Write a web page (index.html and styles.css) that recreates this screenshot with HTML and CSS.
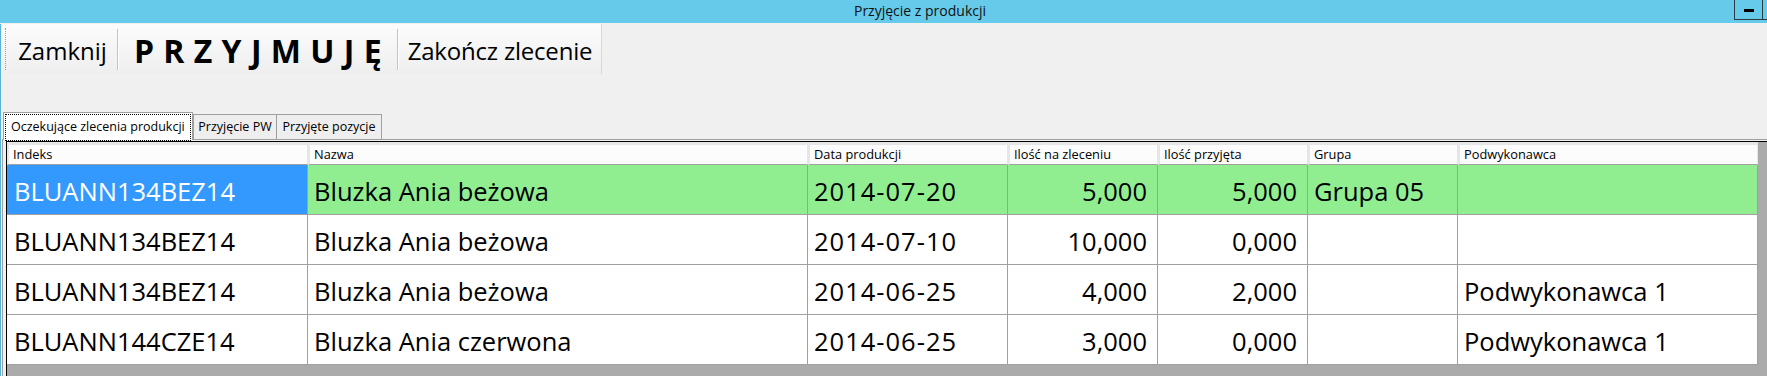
FILE: index.html
```html
<!DOCTYPE html>
<html lang="pl">
<head>
    <meta charset="UTF-8">
    <meta name="viewport" content="width=device-width, initial-scale=1.0">
    <title>Przyjęcie z produkcji</title>
    <link rel="stylesheet" href="styles.css">
</head>
<body>
    <div class="window">
        <div class="titlebar">
            <div class="title">Przyjęcie z produkcji</div>
            <div class="caption">
                <div class="cap-btn min"><span class="bar"></span></div>
                <div class="cap-btn max"></div>
                <div class="cap-btn close"></div>
            </div>
        </div>

        <div class="client">
            <div class="toolbar">
                <div class="grip"></div>
                <div class="tool tool-close">Zamknij</div>
                <div class="sep"></div>
                <div class="tool tool-accept">P R Z Y J M U J Ę</div>
                <div class="sep"></div>
                <div class="tool tool-finish">Zakończ zlecenie</div>
            </div>

            <div class="tabs">
                <div class="tab-strip">
                    <div class="tab active"><span class="focus">Oczekujące zlecenia produkcji</span></div>
                    <div class="tab">Przyjęcie PW</div>
                    <div class="tab last">Przyjęte pozycje</div>
                </div>
                <div class="panel">
                    <div class="grid">
                        <div class="rows">
                            <div class="th">Indeks</div>
                            <div class="th">Nazwa</div>
                            <div class="th">Data produkcji</div>
                            <div class="th">Ilość na zleceniu</div>
                            <div class="th">Ilość przyjęta</div>
                            <div class="th">Grupa</div>
                            <div class="th">Podwykonawca</div>

                            <div class="row done">
                                <div class="td first current">BLUANN134BEZ14</div>
                                <div class="td">Bluzka Ania beżowa</div>
                                <div class="td date">2014-07-20</div>
                                <div class="td num">5,000</div>
                                <div class="td num">5,000</div>
                                <div class="td">Grupa 05</div>
                                <div class="td"></div>
                            </div>
                            <div class="row">
                                <div class="td first">BLUANN134BEZ14</div>
                                <div class="td">Bluzka Ania beżowa</div>
                                <div class="td date">2014-07-10</div>
                                <div class="td num">10,000</div>
                                <div class="td num">0,000</div>
                                <div class="td"></div>
                                <div class="td"></div>
                            </div>
                            <div class="row">
                                <div class="td first">BLUANN134BEZ14</div>
                                <div class="td">Bluzka Ania beżowa</div>
                                <div class="td date">2014-06-25</div>
                                <div class="td num">4,000</div>
                                <div class="td num">2,000</div>
                                <div class="td"></div>
                                <div class="td">Podwykonawca 1</div>
                            </div>
                            <div class="row">
                                <div class="td first">BLUANN144CZE14</div>
                                <div class="td">Bluzka Ania czerwona</div>
                                <div class="td date">2014-06-25</div>
                                <div class="td num">3,000</div>
                                <div class="td num">0,000</div>
                                <div class="td"></div>
                                <div class="td">Podwykonawca 1</div>
                            </div>
                        </div>
                    </div>
                </div>
            </div>
        </div>
    </div>
</body>
</html>
```

FILE: styles.css
```css
html,
body {
  margin: 0;
  padding: 0;
  overflow: hidden;
}
body {
  background: #f0f0f0;
  color: #000;
  font-family: "Open Sans", "Noto Sans", sans-serif;
}
.window {
  width: 1840px;
}

/* title bar */
.titlebar {
  display: flex;
  height: 23px;
  background: #66caeb;
}
.title {
  flex: 1;
  padding-left: 106px; /* same as caption buttons, keeps text centred */
  text-align: center;
  font-size: 14px;
  line-height: 22px;
  color: #111;
}
.caption {
  display: flex;
  align-items: flex-start;
}
.cap-btn {
  box-sizing: border-box;
  height: 20px;
  border: 1px solid #2e3a40;
  border-top: none;
}
.min {
  width: 29px;
  display: flex;
  justify-content: center;
  padding-top: 9px;
}
.min .bar {
  width: 10px;
  height: 3px;
  background: #000;
}
.max {
  width: 29px;
  border-left: none;
}
.close {
  width: 48px;
  border-left: none;
}

/* client area */
.client {
  border-left: 1px solid #58b3d6;
  padding-left: 1px;
}
.toolbar {
  box-sizing: border-box;
  display: flex;
  align-items: center;
  width: 600px;
  height: 50px;
  margin-top: 1px;
  padding-left: 3px;
  background: linear-gradient(#fcfcfc, #eeeeee);
  border-right: 1px solid #d8d8d8;
}
.grip {
  box-sizing: border-box;
  width: 3px;
  height: 42px;
  border-left: 1px dotted #9a9a9a;
}
.tool {
  box-sizing: border-box;
  height: 100%;
  display: flex;
  align-items: center;
  justify-content: center;
  padding-top: 3px;
  font-size: 24px;
  white-space: nowrap;
}
.tool-close {
  width: 109px;
}
.tool-accept {
  width: 278px;
  font-size: 32px;
  font-weight: 700;
  letter-spacing: 0.5px;
}
.tool-finish {
  width: 202px;
  letter-spacing: -0.2px;
}
.sep {
  width: 1px;
  height: 41px;
  background: #c3c3c3;
  border-right: 1px solid #fff;
}

/* tabs */
.tabs {
  margin-top: 38px;
}
.tab-strip {
  display: flex;
  align-items: flex-end;
  height: 27px;
  padding-left: 1px;
}
.tab {
  box-sizing: border-box;
  height: 25px;
  width: 84px;
  border: 1px solid #a0a0a0;
  border-bottom: none;
  background: #eeeeee;
  font-size: 12.5px;
  line-height: 24px;
  text-align: center;
  white-space: nowrap;
}
.tab.last {
  width: 106px;
  margin-left: -1px;
}
.tab.active {
  position: relative;
  z-index: 1;
  width: 190px;
  height: 28px;
  margin-bottom: -1px;
  padding: 1px 1px 0;
  background: #fff;
  text-align: left;
}
.focus {
  display: block;
  height: 25px;
  border: 1px dotted #000;
  padding: 0 5px;
  line-height: 23px;
}
.panel {
  border-top: 1px solid #a0a0a0;
  border-left: 1px solid #a0a0a0;
  padding: 1px 0 0 3px;
}

/* data grid */
.grid {
  height: 300px;
  background: #ababab;
  border-top: 1px solid #000;
  border-left: 1px solid #000;
}
.rows {
  display: grid;
  grid-template-columns: 301px 500px 200px 150px 150px 150px 300px;
  width: 1751px;
}
.row {
  display: contents;
}
.th {
  box-sizing: border-box;
  height: 23px;
  padding-left: 4px;
  background: #fcfcfc;
  border-top: 3px solid #e6e6e6;
  border-left: 2px solid #e6e6e6;
  border-right: 1px solid #e6e6e6;
  border-bottom: 1px solid #a0a0a0;
  font-size: 12.8px;
  line-height: 19px;
  white-space: nowrap;
  overflow: hidden;
}
.td {
  box-sizing: border-box;
  height: 50px;
  padding: 4px 6px 0;
  background: #fff;
  border-right: 1px solid #a0a0a0;
  border-bottom: 1px solid #a0a0a0;
  font-size: 25.5px;
  line-height: 45px;
  white-space: nowrap;
  overflow: hidden;
}
.td.first {
  padding-left: 7px;
}
.td.date {
  letter-spacing: 1px;
}
.td.num {
  text-align: right;
  padding-right: 10px;
}
.done .td {
  background: #90ee90;
}
.done .td.current {
  background: #3399ff;
  color: #fff;
}
```
